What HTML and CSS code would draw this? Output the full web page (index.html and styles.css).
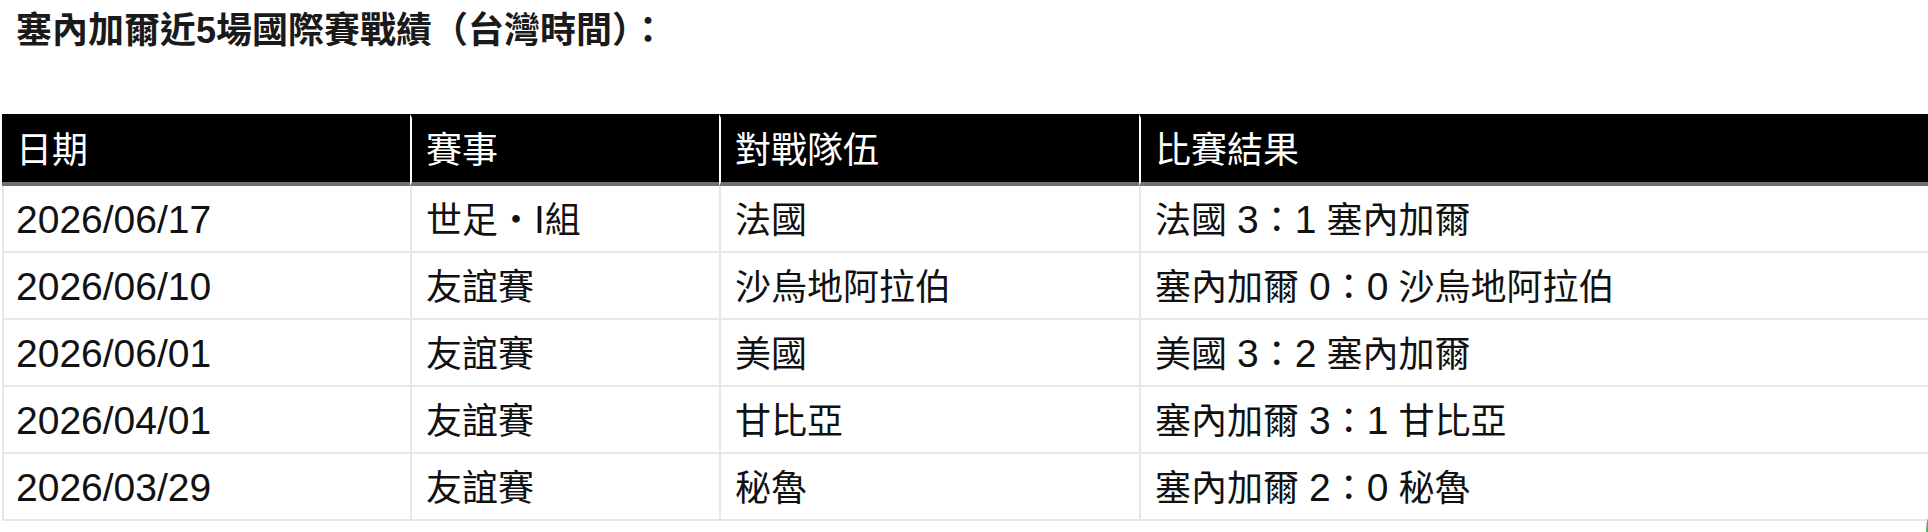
FILE: index.html
```html
<!DOCTYPE html>
<html lang="zh-Hant">
<head>
<meta charset="utf-8">
<title>塞內加爾近5場國際賽戰績</title>
<link rel="stylesheet" href="styles.css">
</head>
<body>
<div class="page">
  <h1 class="title">塞內加爾近5場國際賽戰績（台灣時間）：</h1>
  <table class="results">
    <colgroup>
      <col class="c-date">
      <col class="c-comp">
      <col class="c-opp">
      <col class="c-res">
    </colgroup>
    <thead>
      <tr><th>日期</th><th>賽事</th><th>對戰隊伍</th><th>比賽結果</th></tr>
    </thead>
    <tbody>
      <tr><td><span class="lat">2026/06/17</span></td><td>世足・<span class="lat">I</span>組</td><td>法國</td><td>法國 <span class="lat">3</span>：<span class="lat">1</span> 塞內加爾</td></tr>
      <tr><td><span class="lat">2026/06/10</span></td><td>友誼賽</td><td>沙烏地阿拉伯</td><td>塞內加爾 <span class="lat">0</span>：<span class="lat">0</span> 沙烏地阿拉伯</td></tr>
      <tr><td><span class="lat">2026/06/01</span></td><td>友誼賽</td><td>美國</td><td>美國 <span class="lat">3</span>：<span class="lat">2</span> 塞內加爾</td></tr>
      <tr><td><span class="lat">2026/04/01</span></td><td>友誼賽</td><td>甘比亞</td><td>塞內加爾 <span class="lat">3</span>：<span class="lat">1</span> 甘比亞</td></tr>
      <tr><td><span class="lat">2026/03/29</span></td><td>友誼賽</td><td>秘魯</td><td>塞內加爾 <span class="lat">2</span>：<span class="lat">0</span> 秘魯</td></tr>
    </tbody>
  </table>
</div>
<div class="fab"></div>
</body>
</html>
```
FILE: styles.css
```css
html, body {
  margin: 0;
  padding: 0;
  background: #fff;
  overflow: hidden;
}
body {
  font-family: "Liberation Sans", "Noto Sans CJK TC", sans-serif;
  color: #111;
}
.page {
  display: flex;
  flex-direction: column;
}
.title {
  margin: 0;
  padding: 11px 0 0 16px;
  font-size: 36px;
  line-height: 40px;
  font-weight: 700;
  color: #1a1a1a;
}
.results {
  margin: 63px 0 0 2px;
  width: 1926px;
  table-layout: fixed;
  border-collapse: separate;
  border-spacing: 0;
}
.c-date { width: 408px; }
.c-comp { width: 309px; }
.c-opp { width: 420px; }
.results th {
  background: #000;
  color: #fff;
  font-weight: 400;
  font-size: 36px;
  line-height: 62px;
  text-align: left;
  padding: 2px 14px 0;
  border-top: 4px solid #000;
  border-bottom: 4px solid #707070;
}
.results th + th {
  border-left: 2px solid #fff;
}
.results td {
  font-size: 36px;
  line-height: 60px;
  padding: 5px 14px 0;
  border-bottom: 2px solid #e6e6eb;
  white-space: nowrap;
}
.results td:first-child {
  border-left: 2px solid #e6e6eb;
  padding-left: 12px;
}
.results td + td {
  border-left: 2px solid #e6e6eb;
}
.lat {
  font-size: 39px;
  line-height: 1;
}
.fab {
  position: fixed;
  left: 1926px;
  top: 490px;
  width: 80px;
  height: 80px;
  border-radius: 50%;
  background: #4cb84a;
}
```
